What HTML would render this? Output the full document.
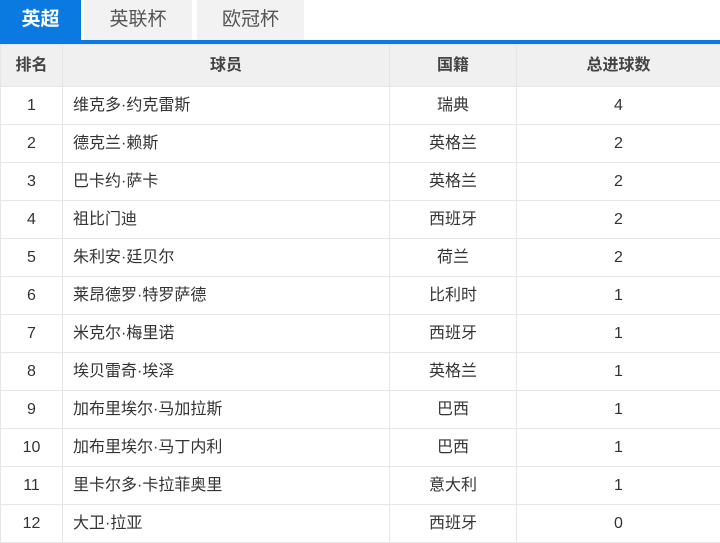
<!DOCTYPE html><html><head><meta charset="utf-8"><style>
body{margin:0;width:720px;height:540px;overflow:hidden;background:#fff;font-family:"Liberation Sans","Noto Sans CJK SC",sans-serif;color:#333}
.tabs{position:relative;height:40px;border-bottom:4px solid #0a7ae0}
.tab{position:absolute;top:0;height:40px;line-height:40px;text-align:center;font-size:19px;background:#f2f2f2;color:#555}
table{border-collapse:collapse;width:720px;table-layout:fixed}
td,th{border:1px solid #e6e6e6;text-align:center;font-size:16px;height:37px;padding:0;line-height:18px;vertical-align:middle}
td div,th div{height:18px;line-height:18px;overflow:visible}
th{background:#f0f0f0;font-weight:bold;height:41px;color:#444}
td.n{text-align:left;padding-left:10px}
</style></head><body>
<div class="tabs">
<div class="tab" style="left:0;width:81px;background:#0a7ae0;color:#fff;font-weight:bold">英超</div>
<div class="tab" style="left:84px;width:108px">英联杯</div>
<div class="tab" style="left:197px;width:107px">欧冠杯</div>
</div>
<table>
<colgroup><col style="width:62px"><col style="width:327px"><col style="width:127px"><col style="width:204px"></colgroup>
<tr><th><div>排名</div></th><th><div>球员</div></th><th><div>国籍</div></th><th><div>总进球数</div></th></tr>
<tr><td><div>1</div></td><td class="n"><div>维克多·约克雷斯</div></td><td><div>瑞典</div></td><td><div>4</div></td></tr>
<tr><td><div>2</div></td><td class="n"><div>德克兰·赖斯</div></td><td><div>英格兰</div></td><td><div>2</div></td></tr>
<tr><td><div>3</div></td><td class="n"><div>巴卡约·萨卡</div></td><td><div>英格兰</div></td><td><div>2</div></td></tr>
<tr><td><div>4</div></td><td class="n"><div>祖比门迪</div></td><td><div>西班牙</div></td><td><div>2</div></td></tr>
<tr><td><div>5</div></td><td class="n"><div>朱利安·廷贝尔</div></td><td><div>荷兰</div></td><td><div>2</div></td></tr>
<tr><td><div>6</div></td><td class="n"><div>莱昂德罗·特罗萨德</div></td><td><div>比利时</div></td><td><div>1</div></td></tr>
<tr><td><div>7</div></td><td class="n"><div>米克尔·梅里诺</div></td><td><div>西班牙</div></td><td><div>1</div></td></tr>
<tr><td><div>8</div></td><td class="n"><div>埃贝雷奇·埃泽</div></td><td><div>英格兰</div></td><td><div>1</div></td></tr>
<tr><td><div>9</div></td><td class="n"><div>加布里埃尔·马加拉斯</div></td><td><div>巴西</div></td><td><div>1</div></td></tr>
<tr><td><div>10</div></td><td class="n"><div>加布里埃尔·马丁内利</div></td><td><div>巴西</div></td><td><div>1</div></td></tr>
<tr><td><div>11</div></td><td class="n"><div>里卡尔多·卡拉菲奥里</div></td><td><div>意大利</div></td><td><div>1</div></td></tr>
<tr><td><div>12</div></td><td class="n"><div>大卫·拉亚</div></td><td><div>西班牙</div></td><td><div>0</div></td></tr>
</table>
</body></html>
